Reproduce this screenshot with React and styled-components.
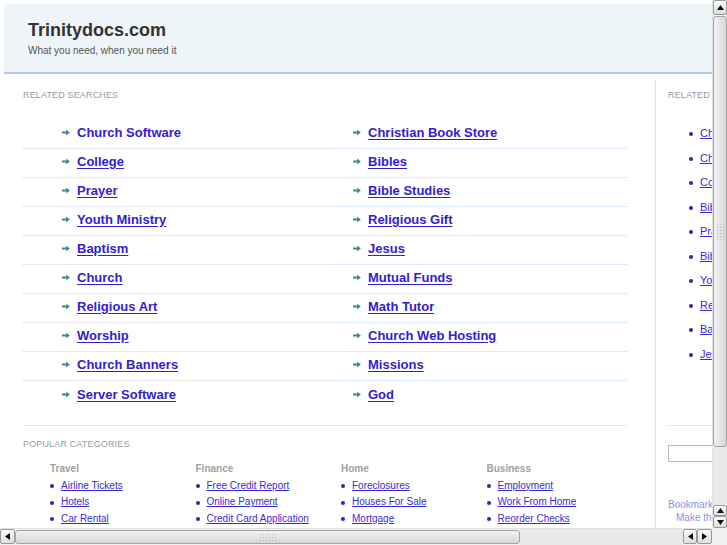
import React from "react";
import styled, { createGlobalStyle, css } from "styled-components";

const Global = createGlobalStyle`
  html, body { margin: 0; padding: 0; background: #fff; }
  body { font-family: "Liberation Sans", Arial, sans-serif; }
  * { box-sizing: border-box; }
`;

const Viewport = styled.div`
  width: 727px;
  height: 545px;
  display: grid;
  grid-template-columns: 712px 15px;
  grid-template-rows: 528px 17px;
  overflow: hidden;
  background: #fff;
`;

const PageArea = styled.div`
  overflow: hidden;
  position: relative;
`;

const Page = styled.div`
  width: 960px;
`;

const Header = styled.header`
  margin: 4px 0 0 4px;
  height: 70px;
  background: #eef5f8;
  border-bottom: 2px solid #b3c7eb;
  padding: 16px 0 0 24px;
`;

const Title = styled.h1`
  margin: 0;
  font-size: 18px;
  line-height: 20px;
  font-weight: bold;
  color: #333;
`;

const Tagline = styled.div`
  margin-top: 5px;
  font-size: 10px;
  line-height: 12px;
  color: #555;
`;

const Body = styled.div`
  display: flex;
  margin-top: 6px;
`;

const Main = styled.main`
  width: 627px;
  padding: 10px 0 0 23px;
  margin-right: 28px;
`;

const Label = styled.div`
  font-size: 9px;
  line-height: 11px;
  letter-spacing: 0.15px;
  color: #9a9a9a;
  text-transform: uppercase;
`;

const SearchGrid = styled.div`
  display: grid;
  grid-template-columns: 307px 297px;
  margin-top: 19px;
`;

const SearchCell = styled.div`
  height: 29px;
  display: flex;
  align-items: center;
  padding-bottom: 4px;
  padding-left: ${(p) => (p.$right ? 23 : 39)}px;
  border-bottom: 1px dotted #c4d4ec;
  ${(p) =>
    p.$last &&
    css`
      border-bottom: none;
      height: 28px;
      padding-bottom: 2px;
    `}
`;

const ArrowIcon = styled.svg`
  width: 8px;
  height: 7px;
  margin-right: 7px;
  flex: none;
  fill: #3b8b85;
`;

const BigLink = styled.a`
  font-size: 13px;
  font-weight: bold;
  color: #3221cf;
  text-decoration: ${(p) => (p.$plain ? "none" : "underline")};
  text-underline-offset: 2px;
  cursor: pointer;
`;

const Divider = styled.div`
  height: 1px;
  background: #dde7f3;
  margin: ${(p) => p.$m || "16px 0 13px"};
`;

const CatGrid = styled.div`
  display: grid;
  grid-template-columns: repeat(4, 145.5px);
  padding-left: 27px;
  margin-top: 12px;
`;

const CatTitle = styled.div`
  font-size: 10px;
  line-height: 13px;
  font-weight: bold;
  color: #a0a0a0;
  margin-bottom: 2px;
`;

const SmallList = styled.ul`
  list-style: none;
  margin: 0;
  padding: 0;
`;

const SmallItem = styled.li`
  display: flex;
  align-items: center;
  height: ${(p) => p.$h || 16.5}px;
  &::before {
    content: "";
    width: 4px;
    height: 4px;
    border-radius: 50%;
    background: #2a27a8;
    margin-right: 7px;
    margin-top: 2px;
    flex: none;
  }
`;

const SmallLink = styled.a`
  font-size: ${(p) => p.$size || 10}px;
  color: #3a2ad6;
  text-decoration: underline;
  text-underline-offset: 1px;
  white-space: nowrap;
  cursor: pointer;
`;

const Sidebar = styled.aside`
  width: 240px;
  border-left: 1px solid #dae4f2;
  padding: 10px 0 0 12px;
  min-height: 480px;
`;

const SideList = styled.div`
  margin-top: 20px;
  padding-left: 21px;
`;

const SearchBox = styled.input`
  display: block;
  width: 200px;
  height: 17px;
  border: 1px solid #b8b8b8;
  margin-top: 19px;
  padding: 0;
`;

const Bookmark = styled.div`
  margin-top: ${(p) => p.$top || 0}px;
  font-size: 10px;
  line-height: 13px;
  color: #8f8fdf;
  padding-left: ${(p) => p.$indent || 0}px;
  white-space: nowrap;
`;

/* ---------- Scrollbars ---------- */

const VBar = styled.div`
  display: flex;
  flex-direction: column;
  background: #f1f1f1;
  border-left: 1px solid #e2e2e2;
`;

const HBar = styled.div`
  display: flex;
  background: #f1f1f1;
  border-top: 1px solid #e2e2e2;
`;

const Corner = styled.div`
  background: #f1f1f1;
`;

const SBtn = styled.div`
  flex: none;
  width: ${(p) => p.$w || 15}px;
  height: ${(p) => p.$h || 15}px;
  border: 1px solid #9a9a9a;
  border-radius: 2px;
  background: linear-gradient(#fbfbfb, #dcdcdc);
  display: flex;
  align-items: center;
  justify-content: center;
  svg { width: 7px; height: 7px; fill: #111; }
`;

const Thumb = styled.div`
  flex: none;
  border: 1px solid #a4a4a4;
  border-radius: 3px;
  display: flex;
  align-items: center;
  justify-content: center;
  ${(p) =>
    p.$vertical
      ? css`
          height: 431px;
          margin: 1px 0 0;
          background: linear-gradient(to right, #f2f2f2, #d6d6d6);
        `
      : css`
          width: 505px;
          margin: 1px 0;
          background: linear-gradient(#f2f2f2, #d6d6d6);
        `}
`;

const Grip = styled.div`
  width: ${(p) => (p.$vertical ? 9 : 18)}px;
  height: ${(p) => (p.$vertical ? 18 : 9)}px;
  background-image: radial-gradient(circle, #b5b5b5 0.8px, transparent 1px);
  background-size: 3px 3px;
`;

const Track = styled.div`
  flex: 1;
  background-color: #efefef;
  background-image: radial-gradient(circle, #e4e4e4 0.6px, transparent 0.8px);
  background-size: 2px 2px;
`;

const Tri = ({ dir }) => {
  const d = {
    up: "M3.5 1 7 6H0z",
    down: "M0 1h7L3.5 6z",
    left: "M6 0v7L1 3.5z",
    right: "M1 0v7l5-3.5z",
  }[dir];
  return (
    <svg viewBox="0 0 7 7">
      <path d={d} />
    </svg>
  );
};

const Arrow = () => (
  <ArrowIcon viewBox="0 0 8 7">
    <path d="M0 2.6h4.2V0.4L7.8 3.5 4.2 6.6V4.4H0z" />
  </ArrowIcon>
);

const left = [
  "Church Software",
  "College",
  "Prayer",
  "Youth Ministry",
  "Baptism",
  "Church",
  "Religious Art",
  "Worship",
  "Church Banners",
  "Server Software",
];
const right = [
  "Christian Book Store",
  "Bibles",
  "Bible Studies",
  "Religious Gift",
  "Jesus",
  "Mutual Funds",
  "Math Tutor",
  "Church Web Hosting",
  "Missions",
  "God",
];

const categories = [
  { title: "Travel", links: ["Airline Tickets", "Hotels", "Car Rental"] },
  { title: "Finance", links: ["Free Credit Report", "Online Payment", "Credit Card Application"] },
  { title: "Home", links: ["Foreclosures", "Houses For Sale", "Mortgage"] },
  { title: "Business", links: ["Employment", "Work From Home", "Reorder Checks"] },
];

const sideLinks = [
  "Church Software",
  "Christian Book Store",
  "College",
  "Bibles",
  "Prayer",
  "Bible Studies",
  "Youth Ministry",
  "Religious Gift",
  "Baptism",
  "Jesus",
];

export default function App() {
  return (
    <>
      <Global />
      <Viewport>
        <PageArea>
          <Page>
            <Header>
              <Title>Trinitydocs.com</Title>
              <Tagline>What you need, when you need it</Tagline>
            </Header>
            <Body>
              <Main>
                <Label>Related Searches</Label>
                <SearchGrid>
                  {left.map((l, i) => (
                    <React.Fragment key={l}>
                      <SearchCell $last={i === left.length - 1}>
                        <Arrow />
                        <BigLink $plain={i === 0}>{l}</BigLink>
                      </SearchCell>
                      <SearchCell $right $last={i === left.length - 1}>
                        <Arrow />
                        <BigLink>{right[i]}</BigLink>
                      </SearchCell>
                    </React.Fragment>
                  ))}
                </SearchGrid>
                <Divider />
                <Label>Popular Categories</Label>
                <CatGrid>
                  {categories.map((c) => (
                    <div key={c.title}>
                      <CatTitle>{c.title}</CatTitle>
                      <SmallList>
                        {c.links.map((l) => (
                          <SmallItem key={l}>
                            <SmallLink>{l}</SmallLink>
                          </SmallItem>
                        ))}
                      </SmallList>
                    </div>
                  ))}
                </CatGrid>
              </Main>
              <Sidebar>
                <Label>Related Searches</Label>
                <SideList>
                  <SmallList>
                    {sideLinks.map((l) => (
                      <SmallItem key={l} $h={24.5}>
                        <SmallLink $size={11}>{l}</SmallLink>
                      </SmallItem>
                    ))}
                  </SmallList>
                </SideList>
                <Divider $m="59px 0 0" />
                <SearchBox type="text" aria-label="search" />
                <Bookmark $top={36}>Bookmark this page</Bookmark>
                <Bookmark $indent={8}>Make this your homepage</Bookmark>
              </Sidebar>
            </Body>
          </Page>
        </PageArea>
        <VBar>
          <SBtn $w={14} $h={15}>
            <Tri dir="up" />
          </SBtn>
          <Thumb $vertical>
            <Grip $vertical />
          </Thumb>
          <Track />
          <SBtn $w={14} $h={11}>
            <Tri dir="up" />
          </SBtn>
          <SBtn $w={14} $h={12}>
            <Tri dir="down" />
          </SBtn>
        </VBar>
        <HBar>
          <SBtn $w={15} $h={15}>
            <Tri dir="left" />
          </SBtn>
          <Thumb>
            <Grip />
          </Thumb>
          <Track />
          <SBtn $w={14} $h={15}>
            <Tri dir="left" />
          </SBtn>
          <SBtn $w={15} $h={15}>
            <Tri dir="right" />
          </SBtn>
        </HBar>
        <Corner />
      </Viewport>
    </>
  );
}
